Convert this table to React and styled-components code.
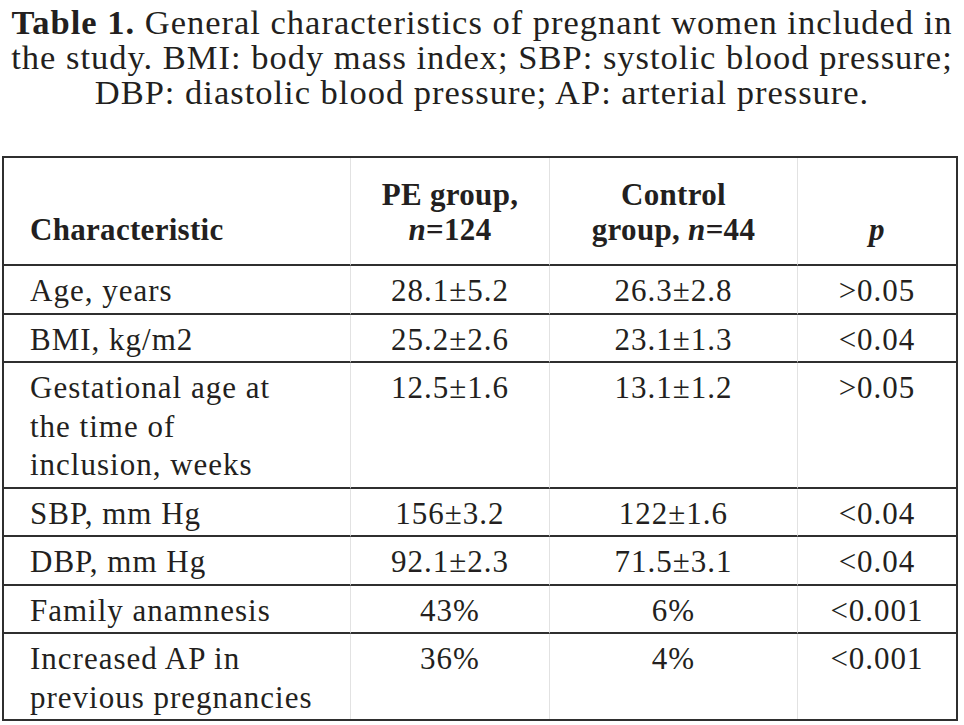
import React from "react";
import styled, { createGlobalStyle } from "styled-components";

const GlobalStyle = createGlobalStyle`
  body {
    margin: 0;
    background: #ffffff;
    color: #231f20;
    font-family: "Liberation Serif", "Times New Roman", serif;
  }
`;

const Page = styled.div`
  width: 964px;
  padding-top: 5px;
`;

const Caption = styled.p`
  margin: 0 0 46px 0;
  font-size: 34.5px;
  line-height: 35px;
  letter-spacing: 1px;
  text-align: center;
  white-space: nowrap;
`;

const Table = styled.table`
  margin-left: 2px;
  width: 956px;
  border: 2px solid #2f2f2f;
  border-spacing: 0;
  border-collapse: separate;
  table-layout: fixed;
`;

const HeadCell = styled.th`
  padding: 19px 8px 17px ${(props) => (props.$first ? "26px" : "8px")};
  border-bottom: 2px solid #2f2f2f;
  border-left: ${(props) => (props.$first ? "none" : "1px solid #e2e2e2")};
  vertical-align: bottom;
  text-align: ${(props) => (props.$first ? "left" : "center")};
  font-size: 31px;
  line-height: 35px;
  font-weight: bold;
  letter-spacing: 0.3px;
  white-space: nowrap;
`;

const Cell = styled.td`
  padding: 6px 8px 2px ${(props) => (props.$first ? "26px" : "8px")};
  border-bottom: ${(props) => (props.$last ? "none" : "2px solid #2f2f2f")};
  border-left: ${(props) => (props.$first ? "none" : "1px solid #e2e2e2")};
  vertical-align: top;
  text-align: ${(props) => (props.$first ? "left" : "center")};
  font-size: 31px;
  line-height: 38.5px;
  letter-spacing: 1px;
  white-space: nowrap;
`;

const rows = [
  { label: ["Age, years"], pe: "28.1±5.2", ctrl: "26.3±2.8", p: ">0.05" },
  { label: ["BMI, kg/m2"], pe: "25.2±2.6", ctrl: "23.1±1.3", p: "<0.04" },
  {
    label: ["Gestational age at", "the time of", "inclusion, weeks"],
    pe: "12.5±1.6",
    ctrl: "13.1±1.2",
    p: ">0.05",
  },
  { label: ["SBP, mm Hg"], pe: "156±3.2", ctrl: "122±1.6", p: "<0.04" },
  { label: ["DBP, mm Hg"], pe: "92.1±2.3", ctrl: "71.5±3.1", p: "<0.04" },
  { label: ["Family anamnesis"], pe: "43%", ctrl: "6%", p: "<0.001" },
  {
    label: ["Increased AP in", "previous pregnancies"],
    pe: "36%",
    ctrl: "4%",
    p: "<0.001",
  },
];

export default function App() {
  return (
    <Page>
      <GlobalStyle />
      <Caption>
        <b>Table 1.</b> General characteristics of pregnant women included in
        <br />
        the study. BMI: body mass index; SBP: systolic blood pressure;
        <br />
        DBP: diastolic blood pressure; AP: arterial pressure.
      </Caption>
      <Table>
        <colgroup>
          <col style={{ width: "346px" }} />
          <col style={{ width: "199px" }} />
          <col style={{ width: "248px" }} />
          <col style={{ width: "159px" }} />
        </colgroup>
        <thead>
          <tr>
            <HeadCell $first>Characteristic</HeadCell>
            <HeadCell>
              PE group,
              <br />
              <i>n</i>=124
            </HeadCell>
            <HeadCell>
              Control
              <br />
              group, <i>n</i>=44
            </HeadCell>
            <HeadCell>
              <i>p</i>
            </HeadCell>
          </tr>
        </thead>
        <tbody>
          {rows.map((row, i) => {
            const last = i === rows.length - 1;
            return (
              <tr key={i}>
                <Cell $first $last={last}>
                  {row.label.map((line, j) => (
                    <React.Fragment key={j}>
                      {j > 0 && <br />}
                      {line}
                    </React.Fragment>
                  ))}
                </Cell>
                <Cell $last={last}>{row.pe}</Cell>
                <Cell $last={last}>{row.ctrl}</Cell>
                <Cell $last={last}>{row.p}</Cell>
              </tr>
            );
          })}
        </tbody>
      </Table>
    </Page>
  );
}
